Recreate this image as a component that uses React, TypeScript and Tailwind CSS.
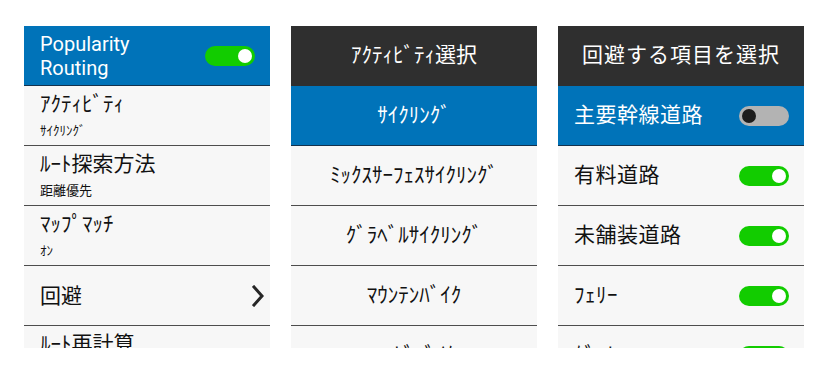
import React from "react";

const FONT = { fontFamily: 'Roboto, "Noto Sans CJK JP", sans-serif' };

function Toggle({ on }: { on: boolean }) {
  return on ? (
    <div className="flex h-[20px] w-[50px] shrink-0 items-center justify-end rounded-full bg-[#12cc00] pr-[3px]">
      <div className="h-[14px] w-[14px] rounded-full bg-white" />
    </div>
  ) : (
    <div className="flex h-[20px] w-[50px] shrink-0 items-center justify-start rounded-full bg-[#b3b3b3] pl-[3px]">
      <div className="h-[14px] w-[14px] rounded-full bg-[#1c1c1c]" />
    </div>
  );
}

function Chevron() {
  return (
    <svg width="12" height="22" viewBox="0 0 12 22" className="shrink-0">
      <polyline points="2,2 10,11 2,20" fill="none" stroke="#262626" strokeWidth="3" strokeLinecap="square" />
    </svg>
  );
}

function TwoLine({ main, sub }: { main: string; sub: string }) {
  return (
    <div className="flex h-[60px] shrink-0 flex-col border-b border-[#4d4d4d] pl-4 pt-[5px] text-[#111]">
      <div className="text-[21px] leading-[26px]">{main}</div>
      <div className="mt-[5px] text-[13px] leading-[17px]">{sub}</div>
    </div>
  );
}

function LeftPanel() {
  return (
    <div className="flex h-[322px] w-[246px] shrink-0 flex-col overflow-hidden bg-[#f7f7f7]">
      <div className="flex h-[60px] shrink-0 items-center justify-between border-b border-[#14324d] bg-[#0073b9] pl-4 pr-[15px] text-white">
        <div className="text-[20px] leading-[24px]">
          Popularity
          <br />
          Routing
        </div>
        <Toggle on />
      </div>
      <TwoLine main="ｱｸﾃｨﾋﾞﾃｨ" sub="ｻｲｸﾘﾝｸﾞ" />
      <TwoLine main="ﾙｰﾄ探索方法" sub="距離優先" />
      <TwoLine main="ﾏｯﾌﾟﾏｯﾁ" sub="ｵﾝ" />
      <div className="flex h-[60px] shrink-0 items-center justify-between border-b border-[#4d4d4d] pl-4 pr-[6px] text-[#111]">
        <div className="text-[21px] leading-[26px]">回避</div>
        <Chevron />
      </div>
      <TwoLine main="ﾙｰﾄ再計算" sub="ｵﾝ" />
    </div>
  );
}

function MiddlePanel() {
  const items = ["ﾐｯｸｽｻｰﾌｪｽｻｲｸﾘﾝｸﾞ", "ｸﾞﾗﾍﾞﾙｻｲｸﾘﾝｸﾞ", "ﾏｳﾝﾃﾝﾊﾞｲｸ", "ﾛｰﾄﾞﾊﾞｲｸ"];
  return (
    <div className="flex h-[322px] w-[246px] shrink-0 flex-col overflow-hidden bg-[#f7f7f7]">
      <div className="flex h-[60px] shrink-0 items-center justify-center bg-[#2f2f2f] text-[21px] text-white">
        ｱｸﾃｨﾋﾞﾃｨ選択
      </div>
      <div className="flex h-[60px] shrink-0 items-center justify-center border-b border-[#14324d] bg-[#0073b9] text-[21px] text-white">
        ｻｲｸﾘﾝｸﾞ
      </div>
      {items.map((t) => (
        <div
          key={t}
          className="flex h-[60px] shrink-0 items-center justify-center border-b border-[#4d4d4d] text-[21px] text-[#111]"
        >
          {t}
        </div>
      ))}
    </div>
  );
}

function RightPanel() {
  const items: [string, boolean][] = [
    ["有料道路", true],
    ["未舗装道路", true],
    ["ﾌｪﾘｰ", true],
    ["ﾀﾞｰﾄ", true],
  ];
  return (
    <div className="flex h-[322px] w-[246px] shrink-0 flex-col overflow-hidden bg-[#f7f7f7]">
      <div className="flex h-[60px] shrink-0 items-center justify-center bg-[#2f2f2f] text-[21px] tracking-[1px] text-white">
        回避する項目を選択
      </div>
      <div className="flex h-[60px] shrink-0 items-center justify-between border-b border-[#14324d] bg-[#0073b9] pl-4 pr-[15px] text-white">
        <div className="text-[21px] tracking-[0.5px]">主要幹線道路</div>
        <Toggle on={false} />
      </div>
      {items.map(([t, on]) => (
        <div
          key={t}
          className="flex h-[60px] shrink-0 items-center justify-between border-b border-[#4d4d4d] pl-4 pr-[15px] text-[#111]"
        >
          <div className="text-[21px] tracking-[0.5px]">{t}</div>
          <Toggle on={on} />
        </div>
      ))}
    </div>
  );
}

export default function App() {
  return (
    <div className="h-[374px] w-[828px] bg-white" style={FONT}>
      <div className="flex gap-[21px] px-6 pt-[26px]">
        <LeftPanel />
        <MiddlePanel />
        <RightPanel />
      </div>
    </div>
  );
}
